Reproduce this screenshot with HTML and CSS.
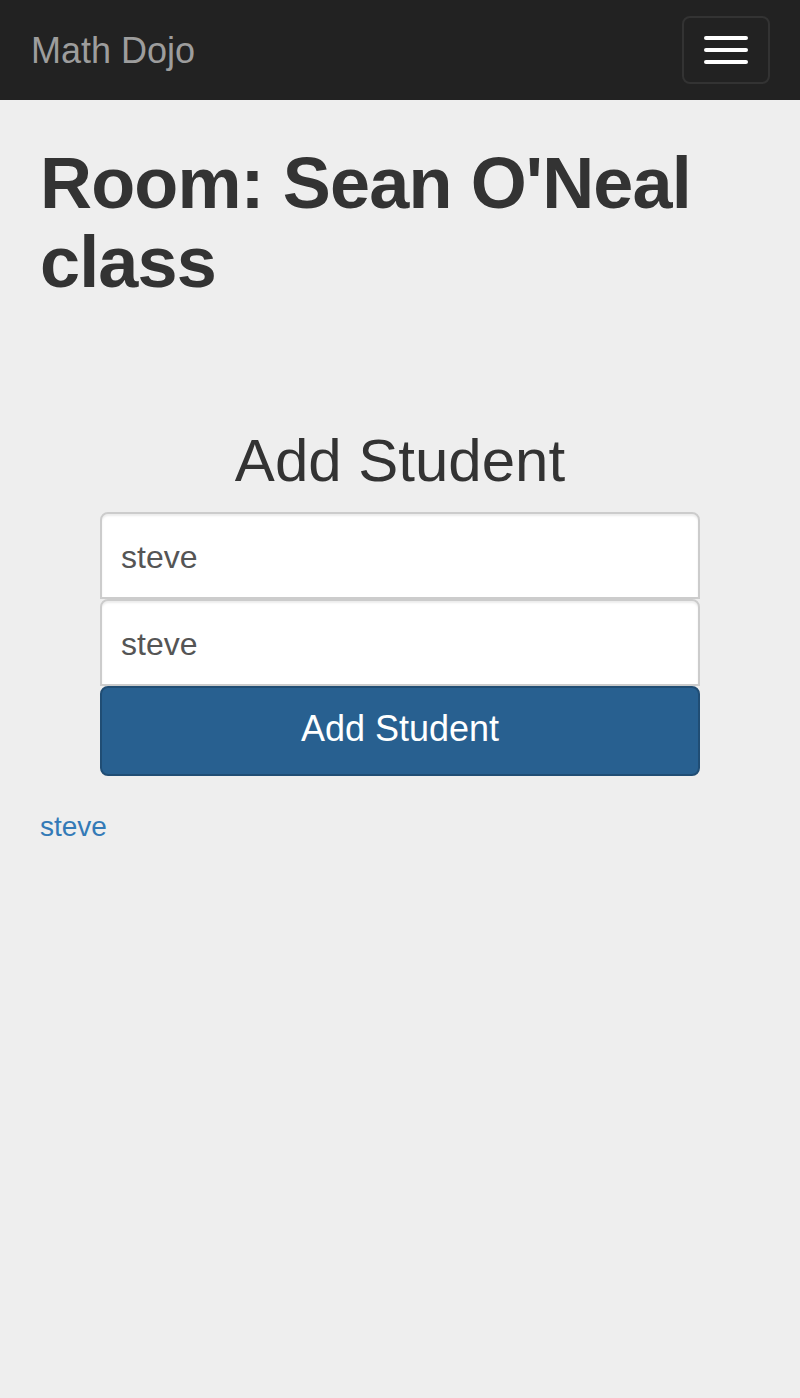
FILE: index.html
```html
<!DOCTYPE html>
<html lang="en">
<head>
<meta charset="utf-8">
<title>Math Dojo</title>
<link rel="stylesheet" href="styles.css">
</head>
<body>
<nav class="navbar">
  <a class="brand" href="#">Math Dojo</a>
  <button class="toggle" type="button" aria-label="Toggle navigation">
    <span class="bar"></span>
    <span class="bar"></span>
    <span class="bar"></span>
  </button>
</nav>
<main class="container">
  <h1 class="room-title">Room: Sean O'Neal class</h1>
  <section class="add-form">
    <h2 class="form-title">Add Student</h2>
    <form class="stack">
      <input class="field field-first" type="text" value="steve">
      <input class="field" type="text" value="steve">
      <button class="submit" type="button">Add Student</button>
    </form>
  </section>
  <ul class="students">
    <li><a class="student-link" href="#">steve</a></li>
  </ul>
</main>
</body>
</html>
```

FILE: styles.css
```css
* {
  box-sizing: border-box;
}

html, body {
  margin: 0;
  padding: 0;
}

body {
  background: #eeeeee;
  font-family: "Liberation Sans", Arial, Helvetica, sans-serif;
  color: #333333;
  min-height: 1398px;
}

.navbar {
  height: 100px;
  background: #222222;
  display: flex;
  align-items: flex-start;
  justify-content: space-between;
  padding: 0 30px 0 30px;
}

.brand {
  display: block;
  padding-top: 31px;
  padding-left: 1px;
  font-size: 36px;
  line-height: 40px;
  color: #9d9d9d;
  text-decoration: none;
}

.toggle {
  margin-top: 16px;
  width: 88px;
  height: 68px;
  padding: 18px 20px;
  background: transparent;
  border: 2px solid #333333;
  border-radius: 8px;
  display: flex;
  flex-direction: column;
  justify-content: space-between;
  align-items: flex-start;
}

.bar {
  display: block;
  width: 44px;
  height: 4px;
  background: #ffffff;
  border-radius: 2px;
}

.container {
  padding: 0 40px;
}

.room-title {
  margin: 44px 0 0 0;
  font-size: 72px;
  line-height: 79.2px;
  font-weight: 700;
  color: #333333;
  letter-spacing: -0.85px;
}

.add-form {
  margin-top: 126px;
  display: flex;
  flex-direction: column;
  align-items: center;
}

.form-title {
  margin: 0 0 18px 0;
  font-size: 60px;
  line-height: 66px;
  font-weight: 400;
  color: #333333;
}

.stack {
  width: 600px;
  display: flex;
  flex-direction: column;
}

.field {
  height: 87px;
  padding: 3px 19px 0 19px;
  border: 2px solid #cccccc;
  border-radius: 8px 8px 0 0;
  background: #ffffff;
  font-family: "Liberation Sans", Arial, Helvetica, sans-serif;
  font-size: 32px;
  color: #555555;
  box-shadow: inset 0 2px 2px rgba(0, 0, 0, 0.075);
}

.submit {
  height: 90px;
  border: 2px solid #204d74;
  border-radius: 8px;
  background: #286090;
  color: #ffffff;
  font-family: "Liberation Sans", Arial, Helvetica, sans-serif;
  font-size: 36px;
  padding: 0 0 4px 0;
}

.students {
  list-style: none;
  margin: 31px 0 0 0;
  padding: 0;
}

.student-link {
  font-size: 28px;
  line-height: 40px;
  color: #337ab7;
  text-decoration: none;
}
```
